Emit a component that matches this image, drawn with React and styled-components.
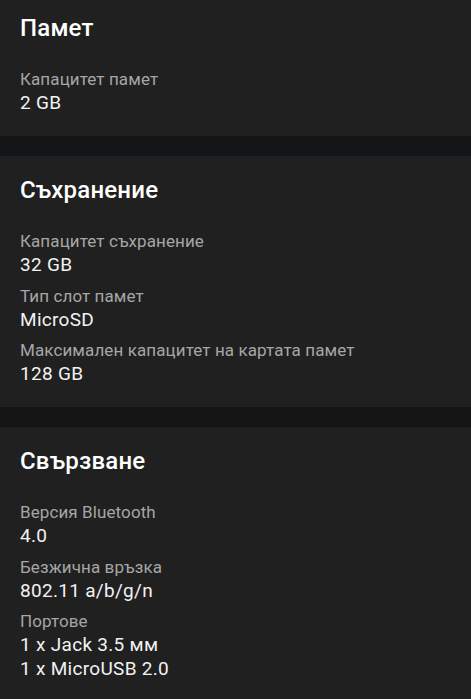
import styled, { createGlobalStyle } from "styled-components";

const GlobalStyle = createGlobalStyle`
  html, body {
    margin: 0;
    padding: 0;
    background-color: #141517;
  }

  body {
    font-family: Roboto, "Noto Sans", sans-serif;
    -webkit-font-smoothing: antialiased;
  }
`;

const Page = styled.div`
  display: flex;
  flex-direction: column;
  gap: 20px;
  margin-top: -6px;
`;

const Card = styled.section`
  background-color: #202020;
  padding: 20px 20px 21px 20px;
`;

const Title = styled.h2`
  margin: 0 0 25px 0;
  font-size: 24px;
  line-height: 28px;
  font-weight: 500;
  letter-spacing: 0.2px;
  color: #ffffff;
`;

const List = styled.dl`
  display: flex;
  flex-direction: column;
  gap: 6.5px;
  margin: 0;
`;

const Item = styled.div`
  display: flex;
  flex-direction: column;
`;

const Label = styled.dt`
  font-size: 17px;
  line-height: 24px;
  letter-spacing: 0.1px;
  color: #a6a6a6;
`;

const Value = styled.dd`
  margin: 0;
  font-size: 19px;
  line-height: 24px;
  letter-spacing: 0.3px;
  color: #f2f2f2;
`;

const sections = [
  {
    title: "Памет",
    items: [{ label: "Капацитет памет", values: ["2 GB"] }],
  },
  {
    title: "Съхранение",
    items: [
      { label: "Капацитет съхранение", values: ["32 GB"] },
      { label: "Тип слот памет", values: ["MicroSD"] },
      { label: "Максимален капацитет на картата памет", values: ["128 GB"] },
    ],
  },
  {
    title: "Свързване",
    items: [
      { label: "Версия Bluetooth", values: ["4.0"] },
      { label: "Безжична връзка", values: ["802.11 a/b/g/n"] },
      { label: "Портове", values: ["1 x Jack 3.5 мм", "1 x MicroUSB 2.0"] },
    ],
  },
];

const App = () => (
  <>
    <GlobalStyle />
    <Page>
      {sections.map((section) => (
        <Card key={section.title}>
          <Title>{section.title}</Title>
          <List>
            {section.items.map((item) => (
              <Item key={item.label}>
                <Label>{item.label}</Label>
                {item.values.map((v) => (
                  <Value key={v}>{v}</Value>
                ))}
              </Item>
            ))}
          </List>
        </Card>
      ))}
    </Page>
  </>
);

export default App;
